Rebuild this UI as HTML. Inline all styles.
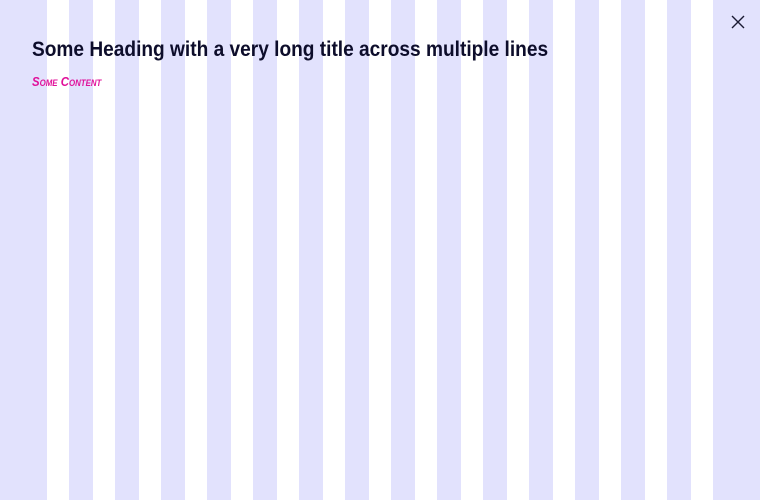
<!DOCTYPE html>
<html><head><meta charset="utf-8"><style>
html,body{margin:0;padding:0;}
body{width:760px;height:500px;overflow:hidden;position:relative;background:#e2e2fd;}
.bg{position:absolute;left:0;top:0;width:760px;height:500px;
background:repeating-linear-gradient(90deg,#e2e2fd 0px,#e2e2fd 24px,#fff 24px,#fff 46px);background-position:23px 0;}
.l{position:absolute;left:0;top:0;width:47px;height:500px;background:#e2e2fd}
.r{position:absolute;left:713px;top:0;width:47px;height:500px;background:#e2e2fd}
h1{position:absolute;left:32px;top:36px;margin:0;font:bold 21px/28px "Liberation Sans",sans-serif;color:#0d0d2b;white-space:nowrap;transform:scaleX(0.91);transform-origin:0 0;}
.s{position:absolute;left:32px;top:74px;font:italic bold 13px/16px "Liberation Sans",sans-serif;font-variant:small-caps;color:#e0109a;white-space:nowrap;transform:scaleX(0.876);transform-origin:0 0;}
svg{position:absolute;left:731px;top:15px}
</style></head><body>
<div class="bg"></div><div class="l"></div><div class="r"></div>
<h1>Some Heading with a very long title across multiple lines</h1>
<div class="s">Some Content</div>
<svg width="14" height="14" viewBox="0 0 14 14"><path d="M1 1L13 13M13 1L1 13" stroke="#1a1a33" stroke-width="1.4" fill="none"/></svg>
</body></html>
